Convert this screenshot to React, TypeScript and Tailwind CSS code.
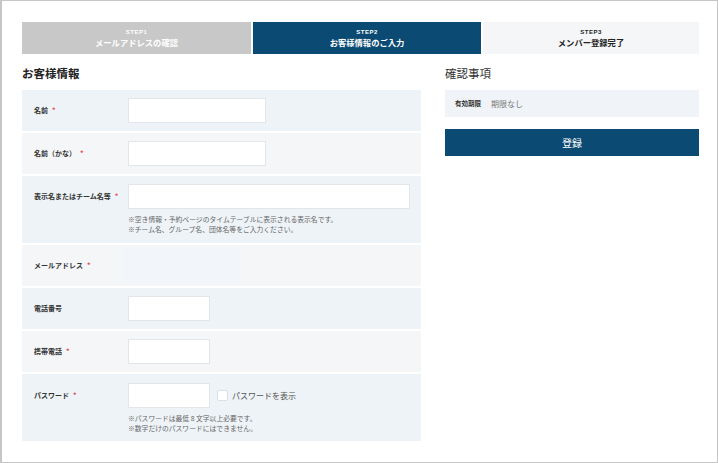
import React from 'react';

const steps = [
  { no: 'STEP1', title: 'メールアドレスの確認', cls: 'w-[229px] bg-[#c8c8c8] text-white' },
  { no: 'STEP2', title: 'お客様情報のご入力', cls: 'w-[228px] bg-[#0b4a72] text-white' },
  { no: 'STEP3', title: 'メンバー登録完了', cls: 'flex-1 bg-[#f5f6f8] text-[#222]' }
];

const Label = ({ text, required }: { text: string; required?: boolean }) => (
  <div className="w-[94px] h-[25px] flex items-center shrink-0 text-[7px] font-bold text-[#333]">
    <span>{text}</span>
    {required && <span className="ml-[4px] text-[#e5484d]">*</span>}
  </div>
);

const Input = ({ w }: { w: string }) => (
  <div className={`${w} h-[25px] bg-white border border-[#e2e6eb] shrink-0`} />
);

const Row = ({ bg, children }: { bg: string; children: React.ReactNode }) => (
  <div className={`${bg} flex pl-[12px] pt-[8px] pb-[8px]`}>{children}</div>
);

const App = () => {
  return (
    <div
      className="w-[718px] h-[463px] bg-white border border-l-2 border-[#c6c6c6] pl-[20px] pt-[21px]"
      style={{ fontFamily: '"Noto Sans CJK JP", "Noto Sans", sans-serif' }}
    >
      <div className="w-[677px]">
        <div className="flex gap-[2px] h-[32px]">
          {steps.map((s) => (
            <div key={s.no} className={`${s.cls} flex flex-col items-center justify-center`}>
              <span
                className="text-[6px] font-bold leading-[8px] tracking-[0.5px]"
                style={{ fontFamily: '"Liberation Sans", sans-serif' }}
              >
                {s.no}
              </span>
              <span className="text-[8.3px] font-bold leading-[12px]">{s.title}</span>
            </div>
          ))}
        </div>

        <div className="flex gap-[24px] mt-[10px]">
          <div className="w-[399px]">
            <h2 className="text-[11.5px] font-bold text-[#222] leading-[18px] mb-[8px]">お客様情報</h2>
            <div className="flex flex-col gap-[2px]">
              <Row bg="bg-[#eef3f7]">
                <Label text="名前" required />
                <Input w="w-[138px]" />
              </Row>
              <Row bg="bg-[#f5f6f8]">
                <Label text="名前（かな）" required />
                <Input w="w-[138px]" />
              </Row>
              <div className="bg-[#eef3f7] flex pl-[12px] pt-[8px] pb-[9px]">
                <Label text="表示名またはチーム名等" required />
                <div>
                  <Input w="w-[282px]" />
                  <p className="mt-[5px] text-[6.8px] leading-[10px] text-[#666]">
                    ※空き情報・予約ページのタイムテーブルに表示される表示名です。
                    <br />
                    ※チーム名、グループ名、団体名等をご入力ください。
                  </p>
                </div>
              </div>
              <div className="bg-[#f5f6f8] flex items-center pl-[12px] h-[41px]">
                <div className="w-[88px] text-[7px] font-bold text-[#333]">
                  メールアドレス<span className="ml-[4px] text-[#e5484d]">*</span>
                </div>
                <div className="w-[119px] h-[35px] bg-[#f2f6fa]" />
              </div>
              <Row bg="bg-[#eef3f7]">
                <Label text="電話番号" />
                <Input w="w-[82px]" />
              </Row>
              <Row bg="bg-[#f5f6f8]">
                <Label text="携帯電話" required />
                <Input w="w-[82px]" />
              </Row>
              <div className="bg-[#eef3f7] flex pl-[12px] pt-[9px] pb-[8px]">
                <Label text="パスワード" required />
                <div>
                  <div className="flex items-center">
                    <Input w="w-[82px]" />
                    <div className="ml-[7px] w-[11px] h-[11px] bg-white border border-[#dcdfe3] rounded-[2px]" />
                    <span className="ml-[4px] text-[8px] text-[#555]">パスワードを表示</span>
                  </div>
                  <p className="mt-[5px] text-[6.8px] leading-[10px] text-[#666]">
                    ※パスワードは最低 8 文字以上必要です。
                    <br />
                    ※数字だけのパスワードにはできません。
                  </p>
                </div>
              </div>
            </div>
          </div>

          <div className="flex-1">
            <h2 className="text-[11.5px] text-[#333] leading-[18px] mb-[8px]">確認事項</h2>
            <div className="h-[27px] bg-[#f0f4f8] flex items-center pl-[10px]">
              <span className="text-[6.5px] font-bold text-[#333]">有効期限</span>
              <span className="ml-[10px] text-[8px] text-[#777]">期限なし</span>
            </div>
            <button className="mt-[12px] w-full h-[27px] bg-[#0b4a72] text-white text-[10px] flex items-center justify-center">
              登録
            </button>
          </div>
        </div>
      </div>
    </div>
  );
};

export default App;
